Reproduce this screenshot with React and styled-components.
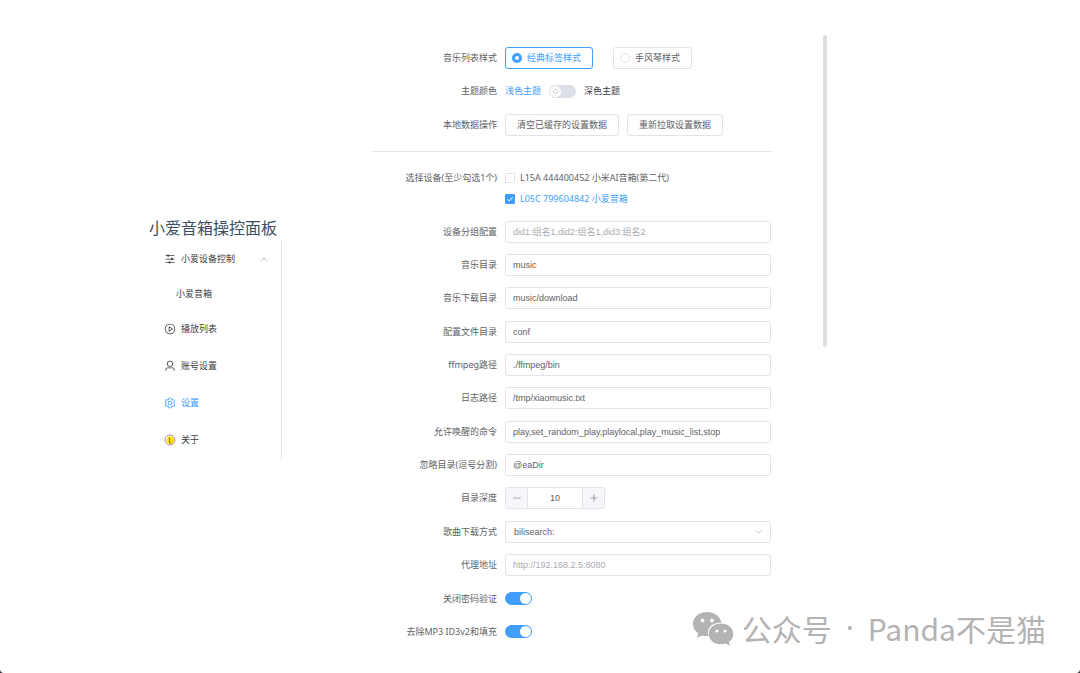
import React, { useState } from 'react';
import styled, { createGlobalStyle, css } from 'styled-components';

const color = {
  primary: '#409eff',
  text: '#606266',
  strong: '#3c3e42',
  border: '#e1e3e9',
  track: '#dcdfe6',
  placeholder: '#a8abb2',
};

const GlobalStyle = createGlobalStyle`
  *, *::before, *::after { box-sizing: border-box; }
  html { background: #2b2f36; }
  body { margin: 0; }
  body, button {
    font-family: 'Noto Sans', 'Noto Sans CJK SC', sans-serif;
    font-size: 9px;
    line-height: 22px;
    color: ${color.text};
  }
`;

const Page = styled.div`
  display: grid;
  grid-template-columns: minmax(0, 149fr) 133px minmax(0, 545fr) minmax(0, 253fr);
  min-height: 100vh;
  background: #fff;
  border-radius: 0 0 4px 4px;
`;

const Sidebar = styled.aside`
  grid-column: 2;
  align-self: center;
`;

const Title = styled.h1`
  margin: 0;
  font-size: 16px;
  line-height: 26px;
  font-weight: 400;
  color: #3d4e60;
  white-space: nowrap;
`;

const Menu = styled.nav`
  display: flex;
  flex-direction: column;
  border-right: 1px solid ${color.border};
`;

const MenuItem = styled.a`
  display: flex;
  align-items: center;
  gap: 5px;
  height: ${(p) => (p.$sub ? 33 : 37)}px;
  padding: 0 13px 0 ${(p) => (p.$sub ? 27 : 15)}px;
  color: ${(p) => (p.$active ? color.primary : color.strong)};
  text-decoration: none;
`;

const Icon = styled.svg`
  flex: none;
  width: ${(p) => p.$size || 12}px;
  height: ${(p) => p.$size || 12}px;
  fill: currentColor;
`;

const MenuArrow = styled(Icon)`
  margin-left: auto;
  color: #909399;
`;

const Main = styled.main`
  display: flex;
  justify-content: space-between;
`;

const Form = styled.form`
  flex: 1;
  min-width: 0;
  display: flex;
  flex-direction: column;
  justify-content: space-between;
  padding: 47px 52px 30px 90px;
`;

const ScrollThumb = styled.div`
  flex: none;
  width: 4px;
  height: 312px;
  margin-top: 35px;
  border-radius: 2px;
  background: #dddee0;
`;

const Row = styled.div`
  display: grid;
  grid-template-columns: 125px minmax(0, 1fr);
  column-gap: 8px;
`;

const labelText = css`
  text-align: right;
  white-space: nowrap;
`;

const RowLabel = styled.label`
  ${labelText}
`;

const GroupLabel = styled.span`
  ${labelText}
`;

const Inline = styled.div`
  display: flex;
  align-items: center;
  gap: ${(p) => p.$gap}px;
  height: 22px;
`;

const Divider = styled.hr`
  width: 100%;
  height: 1px;
  margin: 4px 0;
  border: 0;
  background: ${color.border};
`;

const RadioBox = styled.label`
  display: flex;
  align-items: center;
  gap: 5px;
  height: 22px;
  padding: 0 11px 0 6px;
  border: 1px solid ${(p) => (p.$checked ? color.primary : color.border)};
  border-radius: 3px;
  color: ${(p) => (p.$checked ? color.primary : color.text)};
  white-space: nowrap;
`;

const Radio = styled.input`
  appearance: none;
  width: 10px;
  height: 10px;
  margin: 0;
  border: 1px solid ${color.border};
  border-radius: 50%;
  background: #fff;
  &:checked { border: 3px solid ${color.primary}; }
`;

const ThemeName = styled.span`
  color: ${(p) => (p.$active ? color.primary : color.strong)};
`;

const Switch = styled.input`
  appearance: none;
  display: flex;
  align-items: center;
  width: 27px;
  height: 13px;
  margin: 0;
  padding: 0 1px;
  border-radius: 7px;
  background: ${color.track};
  &::before {
    content: '';
    width: 11px;
    height: 11px;
    border-radius: 50%;
    background: #fff;
  }
  &:checked { justify-content: flex-end; background: ${color.primary}; }
`;

const ThemeSwitch = styled.span`
  position: relative;
  display: flex;
`;

const Sun = styled(Icon)`
  position: absolute;
  top: 2px;
  left: 2px;
  color: #d4d7de;
  pointer-events: none;
`;

const Button = styled.button`
  height: 22px;
  padding: 0 11px;
  border: 1px solid ${color.border};
  border-radius: 3px;
  background: #fff;
  line-height: 20px;
  white-space: nowrap;
`;

const CheckLabel = styled.label`
  display: flex;
  align-items: center;
  gap: 5px;
  height: 21px;
  color: ${(p) => (p.$checked ? color.primary : color.text)};
  white-space: nowrap;
`;

const CheckList = styled.div`
  display: flex;
  flex-direction: column;
`;

const CheckHolder = styled.span`
  position: relative;
  display: flex;
`;

const Checkbox = styled.input`
  appearance: none;
  width: 10px;
  height: 10px;
  margin: 0;
  border: 1px solid ${color.border};
  border-radius: 1px;
  background: #fff;
  &:checked { border-color: ${color.primary}; background: ${color.primary}; }
`;

const Tick = styled.svg`
  position: absolute;
  inset: 0;
  width: 10px;
  height: 10px;
  fill: none;
  stroke: #fff;
  pointer-events: none;
`;

const field = css`
  width: 100%;
  height: 22px;
  border: 1px solid ${color.border};
  border-radius: 3px;
  background: #fff;
  font-family: 'Liberation Sans', 'Noto Sans CJK SC', sans-serif;
  font-size: 9px;
  color: ${color.text};
  outline: none;
`;

const TextInput = styled.input`
  ${field}
  padding: 0 7px;
  &::placeholder { color: ${color.placeholder}; opacity: 1; }
`;

const SelectHolder = styled.div`
  position: relative;
  display: flex;
`;

const Select = styled.select`
  ${field}
  appearance: none;
  padding: 0 24px 0 8px;
`;

const SelectArrow = styled(Icon)`
  position: absolute;
  right: 8px;
  top: 6px;
  color: ${color.placeholder};
  pointer-events: none;
`;

const Stepper = styled.div`
  display: grid;
  grid-template-columns: 21px 56px 21px;
  width: 100px;
  height: 22px;
  border: 1px solid ${color.border};
  border-radius: 3px;
  overflow: hidden;
`;

const StepButton = styled.button`
  display: grid;
  place-items: center;
  padding: 0;
  border: 0;
  background: #f5f7fa;
`;

const StepValue = styled.input`
  width: 100%;
  min-width: 0;
  padding: 0;
  border: solid ${color.border};
  border-width: 0 1px;
  font-family: 'Liberation Sans', sans-serif;
  font-size: 9px;
  color: ${color.text};
  text-align: center;
`;

const Watermark = styled.div`
  position: absolute;
  right: 34px;
  bottom: 23px;
  display: flex;
  align-items: center;
  gap: 8px;
  color: #b3b3b3;
  font-family: 'Noto Sans CJK SC', sans-serif;
  font-size: 30px;
  line-height: 44px;
  white-space: nowrap;
  pointer-events: none;
`;

const WatermarkText = styled.span`
  display: flex;
  gap: 14px;
`;

const Dot = styled.span`
  font-family: 'Noto Sans', sans-serif;
`;

const WechatLogo = styled.svg`
  width: 42px;
  height: 35px;
`;

const paths = {
  operation:
    'M389.44 768a96.064 96.064 0 0 1 181.12 0H896v64H570.56a96.064 96.064 0 0 1-181.12 0H128v-64zm192-288a96.064 96.064 0 0 1 181.12 0H896v64H762.56a96.064 96.064 0 0 1-181.12 0H128v-64zm-320-288a96.064 96.064 0 0 1 181.12 0H896v64H442.56a96.064 96.064 0 0 1-181.12 0H128v-64z',
  play:
    'M512 64a448 448 0 1 1 0 896 448 448 0 0 1 0-896m0 832a384 384 0 0 0 0-768 384 384 0 0 0 0 768m-48-247.616L668.608 512 464 375.616zm10.624-342.656 249.472 166.336a48 48 0 0 1 0 79.872L474.624 718.272A48 48 0 0 1 400 678.336V345.6a48 48 0 0 1 74.624-39.936z',
  user:
    'M512 512a192 192 0 1 0 0-384 192 192 0 0 0 0 384m0 64a256 256 0 1 1 0-512 256 256 0 0 1 0 512m320 320v-96a96 96 0 0 0-96-96H288a96 96 0 0 0-96 96v96a32 32 0 1 1-64 0v-96a160 160 0 0 1 160-160h448a160 160 0 0 1 160 160v96a32 32 0 1 1-64 0',
  setting:
    'M600.704 64a32 32 0 0 1 30.464 22.208l35.2 109.376c14.784 7.232 28.928 15.36 42.432 24.512l112.384-24.192a32 32 0 0 1 34.432 15.36L944.32 364.8a32 32 0 0 1-4.032 37.504l-77.12 85.12a357.12 357.12 0 0 1 0 49.024l77.12 85.248a32 32 0 0 1 4.032 37.504l-88.704 153.6a32 32 0 0 1-34.432 15.296L708.8 803.904c-13.44 9.088-27.648 17.28-42.368 24.512l-35.264 109.376A32 32 0 0 1 600.704 960H423.296a32 32 0 0 1-30.464-22.208L357.696 828.48a351.616 351.616 0 0 1-42.56-24.64l-112.32 24.256a32 32 0 0 1-34.432-15.36L79.68 659.2a32 32 0 0 1 4.032-37.504l77.12-85.248a357.12 357.12 0 0 1 0-48.896l-77.12-85.248A32 32 0 0 1 79.68 364.8l88.704-153.6a32 32 0 0 1 34.432-15.296l112.32 24.256c13.568-9.152 27.776-17.408 42.56-24.64l35.2-109.312A32 32 0 0 1 423.232 64H600.64zm-23.424 64H446.72l-36.352 113.088-24.512 11.968a294.113 294.113 0 0 0-34.816 20.096l-22.656 15.36-116.224-25.088-65.28 113.152 79.68 88.192-1.92 27.136a293.12 293.12 0 0 0 0 40.192l1.92 27.136-79.808 88.192 65.344 113.152 116.224-25.024 22.656 15.296a294.113 294.113 0 0 0 34.816 20.096l24.512 11.968L446.72 896h130.688l36.48-113.152 24.448-11.904a288.282 288.282 0 0 0 34.752-20.096l22.592-15.296 116.288 25.024 65.28-113.152-79.744-88.192 1.92-27.136a293.12 293.12 0 0 0 0-40.256l-1.92-27.136 79.808-88.128-65.344-113.152-116.288 24.96-22.592-15.232a287.616 287.616 0 0 0-34.752-20.096l-24.448-11.904L577.344 128zM512 320a192 192 0 1 1 0 384 192 192 0 0 1 0-384m0 64a128 128 0 1 0 0 256 128 128 0 0 0 0-256',
  up: 'M488.832 344.32l-339.84 356.672a32 32 0 0 0 0 44.16l.384.384a29.44 29.44 0 0 0 42.688 0l320-335.872 319.872 335.872a29.44 29.44 0 0 0 42.688 0l.384-.384a32 32 0 0 0 0-44.16L535.168 344.32a32 32 0 0 0-46.336 0',
  down: 'M831.872 340.864 512 652.672 192.128 340.864a30.592 30.592 0 0 0-42.752 0 29.12 29.12 0 0 0 0 41.6L489.664 714.24a32 32 0 0 0 44.672 0l340.288-331.712a29.12 29.12 0 0 0 0-41.728 30.592 30.592 0 0 0-42.752 0z',
  minus: 'M128 480h768v64H128z',
  plus: 'M480 480V128h64v352h352v64H544v352h-64V544H128v-64z',
};

function Glyph({ as: Comp = Icon, name, size }) {
  return (
    <Comp viewBox="0 0 1024 1024" $size={size} aria-hidden="true">
      <path d={paths[name]} />
    </Comp>
  );
}

function AboutIcon() {
  return (
    <Icon viewBox="0 0 24 24" aria-hidden="true">
      <circle cx="12" cy="12" r="10" fill="#fff" stroke="#b08f86" strokeWidth="2" />
      <circle cx="13" cy="12.500" r="7.500" fill="#ffdf00" />
      <path d="M11 7v11h4" fill="none" stroke="#8a7420" strokeWidth="2" />
    </Icon>
  );
}

function TextRow({ id, label, value, placeholder }) {
  return (
    <Row>
      <RowLabel htmlFor={id}>{label}</RowLabel>
      <TextInput id={id} type="text" defaultValue={value} placeholder={placeholder} />
    </Row>
  );
}

function SwitchRow({ id, label }) {
  return (
    <Row>
      <RowLabel htmlFor={id}>{label}</RowLabel>
      <Inline $gap={8}>
        <Switch id={id} type="checkbox" role="switch" defaultChecked />
      </Inline>
    </Row>
  );
}

const menuItems = [
  { label: '播放列表', icon: <Glyph name="play" /> },
  { label: '账号设置', icon: <Glyph name="user" /> },
  { label: '设置', icon: <Glyph name="setting" />, active: true },
  { label: '关于', icon: <AboutIcon /> },
];

const listStyles = ['经典标签样式', '手风琴样式'];

const deviceNames = ['L15A 444400452 小米AI音箱(第二代)', 'L05C 799604842 小爱音箱'];

const textRows = [
  { id: 'groups', label: '设备分组配置', value: '', placeholder: 'did1:组名1,did2:组名1,did3:组名2' },
  { id: 'music-path', label: '音乐目录', value: 'music' },
  { id: 'download-path', label: '音乐下载目录', value: 'music/download' },
  { id: 'conf-path', label: '配置文件目录', value: 'conf' },
  { id: 'ffmpeg-path', label: 'ffmpeg路径', value: './ffmpeg/bin' },
  { id: 'log-path', label: '日志路径', value: '/tmp/xiaomusic.txt' },
  { id: 'commands', label: '允许唤醒的命令', value: 'play,set_random_play,playlocal,play_music_list,stop' },
  { id: 'exclude', label: '忽略目录(逗号分割)', value: '@eaDir' },
];

export default function App() {
  const [listStyle, setListStyle] = useState(0);
  const [devices, setDevices] = useState([false, true]);
  const [dark, setDark] = useState(false);
  const [depth, setDepth] = useState(10);

  const toggleDevice = (index) =>
    setDevices(devices.map((on, i) => (i === index ? !on : on)));

  return (
    <>
      <GlobalStyle />
      <Page>
        <Sidebar>
          <Title>小爱音箱操控面板</Title>
          <Menu>
            <MenuItem href="#devices">
              <Glyph name="operation" />
              小爱设备控制
              <Glyph as={MenuArrow} name="up" size={8} />
            </MenuItem>
            <MenuItem href="#speaker" $sub>小爱音箱</MenuItem>
            {menuItems.map((item) => (
              <MenuItem key={item.label} href={`#${item.label}`} $active={item.active}>
                {item.icon}
                {item.label}
              </MenuItem>
            ))}
          </Menu>
        </Sidebar>

        <Main>
          <Form onSubmit={(e) => e.preventDefault()}>
            <Row role="radiogroup" aria-labelledby="list-style">
              <GroupLabel id="list-style">音乐列表样式</GroupLabel>
              <Inline $gap={20}>
                {listStyles.map((name, i) => (
                  <RadioBox key={name} $checked={listStyle === i}>
                    <Radio
                      type="radio"
                      name="list-style"
                      checked={listStyle === i}
                      onChange={() => setListStyle(i)}
                    />
                    {name}
                  </RadioBox>
                ))}
              </Inline>
            </Row>
            <Row>
              <RowLabel htmlFor="theme">主题颜色</RowLabel>
              <Inline $gap={8}>
                <ThemeName $active={!dark}>浅色主题</ThemeName>
                <ThemeSwitch>
                  <Switch
                    id="theme"
                    type="checkbox"
                    role="switch"
                    checked={dark}
                    onChange={() => setDark(!dark)}
                  />
                  <Sun viewBox="0 0 18 18" $size={9} aria-hidden="true">
                    <circle cx="9" cy="9" r="4" fill="none" stroke="currentColor" strokeWidth="2" />
                    <path
                      d="M9 0v3M9 15v3M0 9h3M15 9h3M3 3l2 2M13 13l2 2M3 15l2-2M13 5l2-2"
                      stroke="currentColor"
                      strokeWidth="1"
                    />
                  </Sun>
                </ThemeSwitch>
                <ThemeName $active={dark}>深色主题</ThemeName>
              </Inline>
            </Row>
            <Row>
              <GroupLabel>本地数据操作</GroupLabel>
              <Inline $gap={8}>
                <Button type="button">清空已缓存的设置数据</Button>
                <Button type="button">重新拉取设置数据</Button>
              </Inline>
            </Row>

            <Divider />

            <Row role="group" aria-labelledby="device-list">
              <GroupLabel id="device-list">选择设备(至少勾选1个)</GroupLabel>
              <CheckList>
                {deviceNames.map((name, i) => (
                  <CheckLabel key={name} $checked={devices[i]}>
                    <CheckHolder>
                      <Checkbox
                        type="checkbox"
                        checked={devices[i]}
                        onChange={() => toggleDevice(i)}
                      />
                      {devices[i] && (
                        <Tick viewBox="0 0 10 10" aria-hidden="true">
                          <path d="M2.5 5.2 4.3 7 7.6 3.3" />
                        </Tick>
                      )}
                    </CheckHolder>
                    {name}
                  </CheckLabel>
                ))}
              </CheckList>
            </Row>

            {textRows.map((row) => (
              <TextRow key={row.id} {...row} />
            ))}

            <Row>
              <RowLabel htmlFor="depth">目录深度</RowLabel>
              <Stepper>
                <StepButton type="button" aria-label="减少" onClick={() => setDepth(depth - 1)}>
                  <Glyph name="minus" size={10} />
                </StepButton>
                <StepValue
                  id="depth"
                  type="text"
                  inputMode="numeric"
                  value={depth}
                  onChange={(e) => setDepth(Number(e.target.value) || 0)}
                />
                <StepButton type="button" aria-label="增加" onClick={() => setDepth(depth + 1)}>
                  <Glyph name="plus" size={10} />
                </StepButton>
              </Stepper>
            </Row>
            <Row>
              <RowLabel htmlFor="search">歌曲下载方式</RowLabel>
              <SelectHolder>
                <Select id="search" defaultValue="bilisearch:">
                  <option>bilisearch:</option>
                </Select>
                <Glyph as={SelectArrow} name="down" size={9} />
              </SelectHolder>
            </Row>
            <TextRow id="proxy" label="代理地址" value="" placeholder="http://192.168.2.5:8080" />
            <SwitchRow id="no-auth" label="关闭密码验证" />
            <SwitchRow id="strip-id3" label="去除MP3 ID3v2和填充" />
          </Form>
          <ScrollThumb />
        </Main>
      </Page>

      <Watermark>
        <WechatLogo viewBox="0 0 42 35" aria-hidden="true">
          <path
            fill="#b3b3b3"
            d="M15 1C6.700 1 1 6.300 1 13c0 4 2 7.200 5.400 9.500L5 27l5.200-2.600c2 .5 4 .8 6.300.6C14 17 20 11.500 29.500 11.500 28 5 22 1 15 1z"
          />
          <path
            fill="#b3b3b3"
            d="M29 12.500c-7 0-12.300 4.600-12.300 10.400S22 33.300 29 33.300c1.700 0 3.200-.3 4.700-.8l4.300 2.200-1.200-3.800c2.800-1.900 4.500-4.800 4.500-8C41.300 17.100 36 12.500 29 12.500z"
          />
          <g fill="#fff">
            <circle cx="10.500" cy="9.500" r="1.900" />
            <circle cx="20" cy="9.500" r="1.900" />
            <circle cx="25" cy="20" r="1.600" />
            <circle cx="33" cy="20" r="1.600" />
          </g>
        </WechatLogo>
        <WatermarkText>
          <span>公众号</span>
          <Dot>·</Dot>
          <span>Panda不是猫</span>
        </WatermarkText>
      </Watermark>
    </>
  );
}
